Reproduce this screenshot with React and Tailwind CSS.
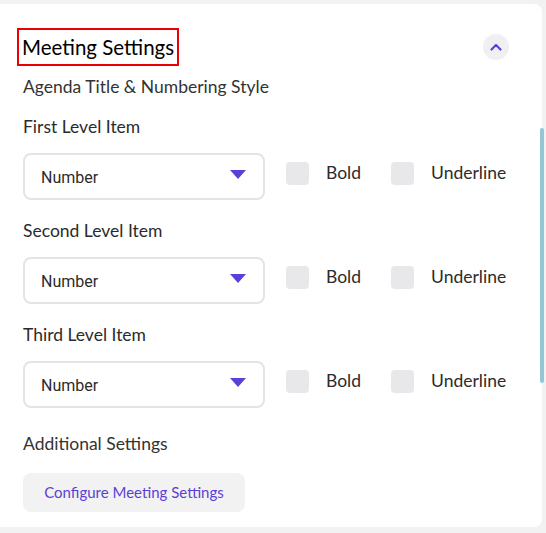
import React from 'react';

const levels = ['First Level Item', 'Second Level Item', 'Third Level Item'];

function Check({ label }) {
    return (
        <label className="flex items-center gap-[17px]">
            <span className="w-[23px] h-[23px] rounded-[4px] bg-[#e8e8eb]" />
            <span className="text-[17.5px] text-[#2b2b2b]">{label}</span>
        </label>
    );
}

function LevelRow({ title }) {
    return (
        <div className="flex flex-col">
            <div className="text-[17.5px] text-[#2b2b2b] leading-[20px]">{title}</div>
            <div className="flex items-center mt-[16px]">
                <div className="w-[242px] h-[47px] border-2 border-[#e4e4e4] rounded-[8px] flex items-center justify-between pl-[16px] pr-[17px]">
                    <span className="text-[16px] text-[#2b2b2b] mt-[3px]" style={{ fontFamily: 'Roboto, sans-serif' }}>Number</span>
                    <svg width="16" height="9" viewBox="0 0 16 9" className="-mt-[5px]">
                        <path d="M0 0 H16 L8 9 Z" fill="#5b3fd6" />
                    </svg>
                </div>
                <div className="ml-[21px] -mt-[7px] flex items-center gap-[30px]">
                    <Check label="Bold" />
                    <Check label="Underline" />
                </div>
            </div>
        </div>
    );
}

export default function App() {
    return (
        <div className="w-[546px] h-[533px] bg-[#f2f2f2] pt-[4px] overflow-hidden" style={{ fontFamily: 'Lato, "Open Sans", sans-serif' }}>
            <div className="relative w-[542px] h-[523px] bg-white rounded-r-[8px] px-[23px]">
                {/* Header */}
                <div className="flex items-center justify-between pt-[24px]">
                    <h2 className="-ml-[6px] border-2 border-[#ee0000] px-[3px] h-[38px] flex items-center text-[20.5px] text-black font-normal">
                        Meeting Settings
                    </h2>
                    <button className="w-[26px] h-[26px] rounded-full bg-[#f0f0f3] flex items-center justify-center mr-[10px]">
                        <svg width="12" height="8" viewBox="0 0 12 8">
                            <path d="M1.5 6.5 L6 2 L10.5 6.5" stroke="#5b3fd6" strokeWidth="2.2" fill="none" strokeLinecap="round" strokeLinejoin="round" />
                        </svg>
                    </button>
                </div>

                <div className="mt-[11px] text-[17.5px] text-[#333] leading-[20px]">Agenda Title &amp; Numbering Style</div>

                <div className="mt-[20px] flex flex-col gap-[21px]">
                    {levels.map((t) => (
                        <LevelRow key={t} title={t} />
                    ))}
                </div>

                <div className="mt-[26px] text-[17.5px] text-[#333] leading-[20px]">Additional Settings</div>
                <button className="mt-[19px] w-[222px] h-[39px] rounded-[8px] bg-[#f2f2f2] text-[15px] text-[#5b3fd6]">
                    Configure Meeting Settings
                </button>

                {/* scrollbar */}
                <div className="absolute right-[-2px] top-[124px] w-[4px] h-[255px] rounded-full bg-[#93c7d4]" />
            </div>
        </div>
    );
}
